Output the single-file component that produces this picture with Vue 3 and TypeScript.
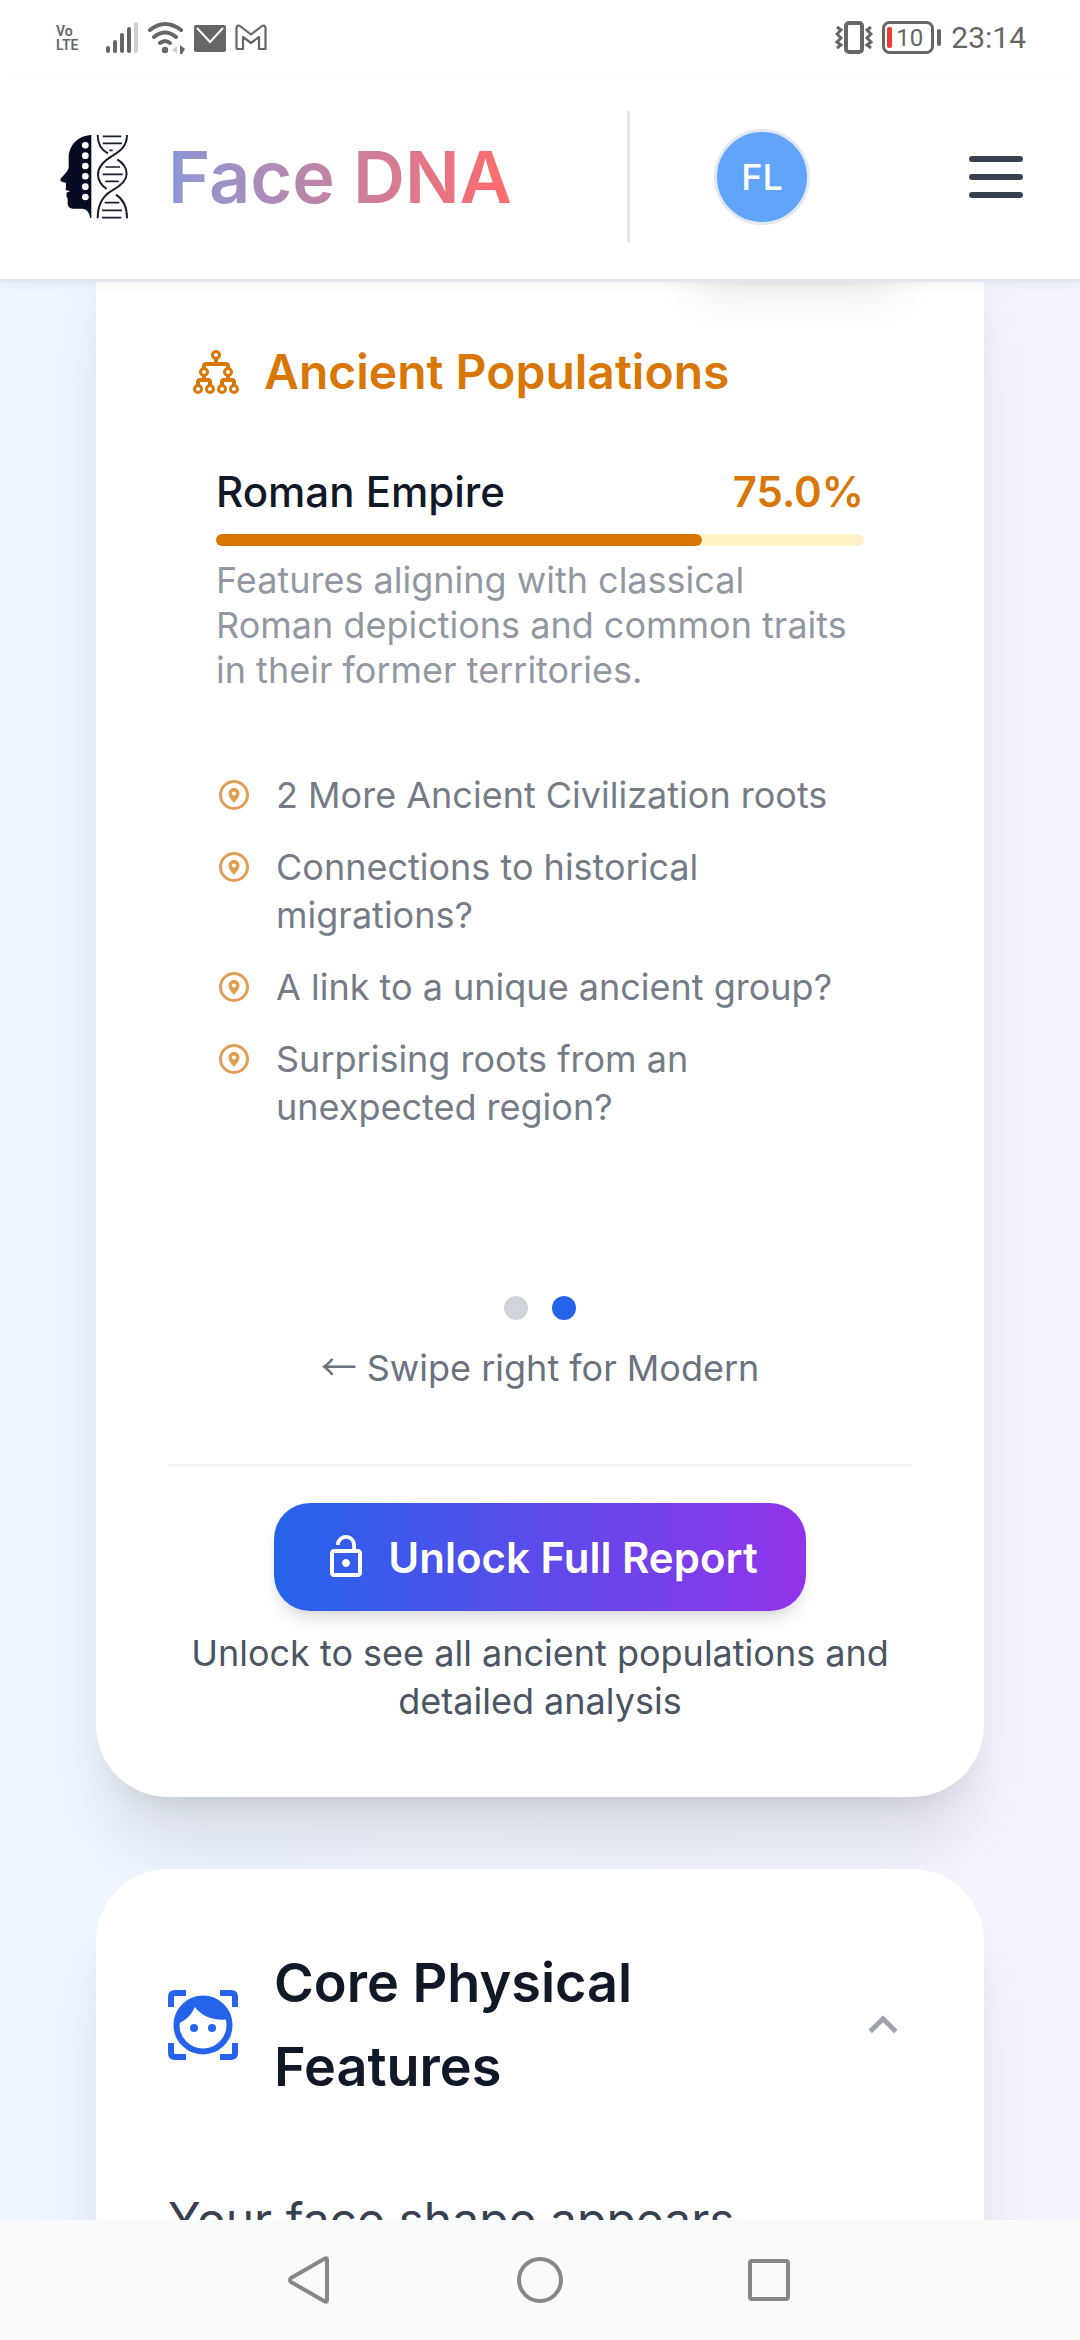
<script setup lang="ts">
import { ref } from 'vue'

interface Population {
  name: string
  percent: number
  description: string
}

const population: Population = {
  name: 'Roman Empire',
  percent: 75,
  description:
    'Features aligning with classical Roman depictions and common traits in their former territories.',
}

const teasers: string[] = [
  '2 More Ancient Civilization roots',
  'Connections to historical migrations?',
  'A link to a unique ancient group?',
  'Surprising roots from an unexpected region?',
]

const slides: string[] = ['Modern', 'Ancient']
const activeSlide = ref<number>(1)
const featuresOpen = ref<boolean>(true)
</script>

<template>
  <div class="screen">
    <div class="status">
      <div class="status-side">
        <span class="volte">Vo<br />LTE</span>
        <svg class="signal" width="32" height="34" viewBox="0 0 32 34" fill="#666">
          <rect x="0" y="25" width="4" height="7" rx="2" />
          <rect x="7" y="19" width="4" height="13" rx="2" />
          <rect x="14" y="12" width="4" height="20" rx="2" />
          <rect x="21" y="6" width="4" height="26" rx="2" />
          <rect x="28" y="1" width="4" height="31" rx="2" fill="#d2d2d2" />
        </svg>
        <svg class="wifi" width="38" height="34" viewBox="0 0 38 34" fill="none" stroke="#666" stroke-width="4" stroke-linecap="round">
          <path d="M3 9Q18 -3 34 9" />
          <path d="M7 16Q18 7 29 16" />
          <path d="M13 22Q18 18 23 22" />
          <circle cx="18" cy="29" r="3.2" fill="#666" stroke="none" />
          <path d="M25 29l5-4v8z" fill="#d2d2d2" stroke="none" />
          <path d="M33 24l5 4-3 5-2 0z" fill="#666" stroke="none" />
        </svg>
        <svg class="mail" width="32" height="34" viewBox="0 0 32 34">
          <rect x="0" y="4" width="32" height="27" rx="2" fill="#666" />
          <path d="M3 7l13 14L29 7" fill="none" stroke="#fff" stroke-width="2" />
        </svg>
        <svg class="gmail" width="32" height="34" viewBox="0 0 32 34" fill="none" stroke="#666" stroke-width="2.2" stroke-linejoin="round">
          <path d="M1.500 7Q2 3.500 5 5L16 13.500 27 5Q30 3.500 30.500 7V28H24V16L16 22 8 16V28H3Q1.500 28 1.500 26.500Z" />
        </svg>
      </div>
      <div class="status-side">
        <svg width="38" height="34" viewBox="0 0 38 34" fill="none" stroke="#666">
          <rect x="11" y="2" width="16" height="29" rx="3" stroke-width="4" />
          <path d="M2 6l4 3-4 4 4 4-4 4 4 3-4 3M36 6l-4 3 4 4-4 4 4 4-4 3 4 3" stroke-width="3" />
        </svg>
        <span class="battery">
          <svg width="60" height="34" viewBox="0 0 60 34">
            <rect x="1.500" y="1.500" width="49" height="30" rx="6" fill="none" stroke="#666" stroke-width="3" />
            <rect x="5" y="6" width="5" height="21" rx="2" fill="#f03a2e" />
            <rect x="55" y="8" width="4" height="17" rx="2" fill="#666" />
          </svg>
          <span class="battery-level">10</span>
        </span>
        <time class="clock">23:14</time>
      </div>
    </div>

    <header class="header">
      <a class="brand" href="#">
        <svg width="69" height="84" viewBox="30 44 207 252" aria-hidden="true">
          <path
            fill="#050b20"
            d="M124 44C84 46 57 74 56 112L56 140C56 150 44 162 33 174C29 179 32 184 38 185L48 187L48 202L46 208L60 213L49 217L50 224C48 228 52 232 53 236L53 250C54 262 62 265 74 265L98 265C112 267 118 278 120 292L124 294Z"
          />
          <g fill="#fff">
            <circle v-for="n in 6" :key="n" cx="106" :cy="44 + n * 31" r="10" />
          </g>
          <g fill="none" stroke="#1a1f30" stroke-width="6">
            <path d="M143 44C143 75 156 90 174 99M202 117C222 130 230 145 230 160C230 185 205 200 187 210C158 226 143 250 143 294" />
            <path d="M231 44C231 78 210 92 188 106C158 124 144 140 144 162C144 182 155 196 170 206M198 223C220 237 231 258 231 294" />
            <path d="M158 48H214M158 69H216M178 90H188M166 140H210M158 162H218M166 183H206M164 247H208M156 270H216M156 292H214" stroke-width="5" />
          </g>
        </svg>
        <span class="brand-name">Face DNA</span>
      </a>
      <span class="header-rule"></span>
      <button class="avatar" type="button">FL</button>
      <button class="menu" type="button" aria-label="Menu">
        <svg width="72" height="72" viewBox="0 0 24 24" fill="none" stroke="#374151" stroke-width="2" stroke-linecap="round">
          <path d="M4 6h16M4 12h16M4 18h16" />
        </svg>
      </button>
    </header>

    <main class="content">
      <section class="card card-ancestry">
        <div class="slide">
          <h2 class="slide-title">
            <svg width="48" height="48" viewBox="0 0 48 48" fill="none" stroke="currentColor" stroke-width="3" aria-hidden="true">
              <circle cx="24" cy="7" r="3.500" />
              <circle cx="12" cy="24" r="3.500" />
              <circle cx="36" cy="24" r="3.500" />
              <circle cx="6" cy="41" r="3.500" />
              <circle cx="18" cy="41" r="3.500" />
              <circle cx="30" cy="41" r="3.500" />
              <circle cx="42" cy="41" r="3.500" />
              <path d="M24 10v6M12 21v-3q0-2 2-2h20q2 0 2 2v3" stroke-width="4" />
              <path d="M12 27v5M6 38v-4q0-2 2-2h8q2 0 2 2v4M36 27v5M30 38v-4q0-2 2-2h8q2 0 2 2v4" stroke-width="4" />
            </svg>
            Ancient Populations
          </h2>

          <div class="population">
            <div class="population-head">
              <span class="population-name">{{ population.name }}</span>
              <span class="population-percent">{{ population.percent.toFixed(1) }}%</span>
            </div>
            <div class="bar">
              <div class="bar-fill" :style="{ width: population.percent + '%' }"></div>
            </div>
            <p class="population-text">{{ population.description }}</p>
          </div>

          <ul class="teasers">
            <li v-for="teaser in teasers" :key="teaser" class="teaser">
              <svg width="36" height="36" viewBox="0 0 36 36" aria-hidden="true">
                <circle cx="18" cy="18" r="13.500" fill="none" stroke="#e2a056" stroke-width="3" />
                <path fill="#e2a056" fill-rule="evenodd" d="M18 11c-3.300 0-5.500 2.400-5.500 5.500 0 3.500 3 6.500 5.500 9.500 2.500-3 5.500-6 5.500-9.500 0-3.100-2.200-5.500-5.500-5.500zm0 3.500a2 2 0 1 1 0 4 2 2 0 0 1 0-4z" />
              </svg>
              <span>{{ teaser }}</span>
            </li>
          </ul>
        </div>

        <div class="dots">
          <button
            v-for="(slide, index) in slides"
            :key="slide"
            type="button"
            class="dot"
            :class="{ active: index === activeSlide }"
            :aria-label="slide"
            @click="activeSlide = index"
          ></button>
        </div>
        <p class="hint"><span class="arrow">←</span> Swipe right for Modern</p>

        <div class="unlock">
          <button class="unlock-button" type="button">
            <svg width="48" height="48" viewBox="0 0 24 24" fill="#fff" aria-hidden="true">
              <path d="M12 17c1.100 0 2-.9 2-2s-.9-2-2-2-2 .9-2 2 .9 2 2 2zm6-9h-1V6c0-2.760-2.240-5-5-5S7 3.240 7 6h1.900c0-1.710 1.390-3.100 3.100-3.100 1.710 0 3.100 1.390 3.100 3.100v2H6c-1.100 0-2 .9-2 2v10c0 1.100.9 2 2 2h12c1.100 0 2-.9 2-2V10c0-1.100-.9-2-2-2zm0 12H6V10h12v10z" />
            </svg>
            Unlock Full Report
          </button>
          <p class="unlock-text">Unlock to see all ancient populations and detailed analysis</p>
        </div>
      </section>

      <section class="card card-features">
        <button class="features-head" type="button" :aria-expanded="featuresOpen" @click="featuresOpen = !featuresOpen">
          <svg width="70" height="72" viewBox="1 0 70 72" aria-hidden="true">
            <path fill="none" stroke="#2563eb" stroke-width="6" d="M19 4H8q-4 0-4 4v10M53 4h11q4 0 4 4v10M19 68H8q-4 0-4-4V54M53 68h11q4 0 4-4V54" />
            <circle cx="36" cy="36" r="26.500" fill="none" stroke="#2563eb" stroke-width="6" />
            <path fill="#2563eb" d="M8 36C8 20 20 8 36 8S62 19 63 30C48 33 34 27 28 18C25 25 19 32 8 36Z" />
            <circle cx="27" cy="39" r="4" fill="#2563eb" />
            <circle cx="45" cy="39" r="4" fill="#2563eb" />
          </svg>
          <span class="features-title">Core Physical Features</span>
          <svg width="58" height="58" viewBox="0 0 24 24" fill="#9ca3af" aria-hidden="true">
            <path d="M12 8l-6 6 1.410 1.410L12 10.830l4.590 4.580L18 14z" />
          </svg>
        </button>
        <p v-if="featuresOpen" class="features-text">Your face shape appears</p>
      </section>
    </main>

    <nav class="system-nav">
      <button type="button" aria-label="Back">
        <svg width="48" height="48" viewBox="0 0 48 48" fill="none" stroke="#888" stroke-width="4" stroke-linejoin="round">
          <path d="M37 3Q40 1 40 4V44Q40 47 37 45L4 26Q2 24 4 22Z" />
        </svg>
      </button>
      <button type="button" aria-label="Home">
        <svg width="48" height="48" viewBox="0 0 48 48" fill="none" stroke="#888" stroke-width="4">
          <circle cx="24" cy="24" r="21" />
        </svg>
      </button>
      <button type="button" aria-label="Recent apps">
        <svg width="48" height="48" viewBox="0 0 48 48" fill="none" stroke="#888" stroke-width="4">
          <rect x="5" y="5" width="38" height="38" rx="2" />
        </svg>
      </button>
    </nav>
  </div>
</template>

<style>
body {
  margin: 0;
}
</style>

<style scoped>
.screen {
  display: flex;
  flex-direction: column;
  height: 100vh;
  font-family: Inter, 'Liberation Sans', sans-serif;
  background: linear-gradient(to right, #eef6ff, #f4f4fe);
}

h2,
p,
ul {
  margin: 0;
  padding: 0;
}

button {
  padding: 0;
  border: 0;
  background: none;
  font-family: inherit;
  cursor: pointer;
}

svg {
  display: block;
  flex: none;
}

/* Phone status bar */
.status {
  display: flex;
  flex: none;
  align-items: center;
  justify-content: space-between;
  box-sizing: border-box;
  height: 75px;
  padding: 0 54px 0 56px;
  background: #fff;
  color: #666;
  position: relative;
  z-index: 2;
}

.status-side {
  display: flex;
  align-items: center;
  gap: 9px;
}

.volte {
  width: 41px;
  font: 600 14px/14px Roboto, sans-serif;
}

.battery {
  position: relative;
}

.battery-level {
  position: absolute;
  left: 14px;
  top: 0;
  font: 400 24px/34px Roboto, sans-serif;
}

.clock {
  font: 400 30px/40px Roboto, sans-serif;
}

/* App header */
.header {
  display: flex;
  flex: none;
  align-items: center;
  height: 204px;
  padding: 0 48px 0 60px;
  border-bottom: 3px solid #e2e8f0;
  background: #fff;
  box-shadow: 0 3px 9px rgba(0, 0, 0, 0.05);
  position: relative;
  z-index: 2;
}

.brand {
  display: flex;
  flex: 1;
  align-items: center;
  gap: 39px;
  text-decoration: none;
}

.brand-name {
  font-size: 72px;
  font-weight: 600;
  line-height: 96px;
  color: transparent;
  background: linear-gradient(to right, #8b98d8, #ff6b6b);
  background-clip: text;
  -webkit-background-clip: text;
}

.header-rule {
  width: 3px;
  height: 132px;
  background: #e2e8f0;
}

.avatar {
  width: 96px;
  height: 96px;
  margin: 0 150px 0 84px;
  border: 3px solid #e2e8f0;
  border-radius: 50%;
  background: #60a5fa;
  color: #fff;
  font-size: 36px;
  font-weight: 500;
}

/* Cards */
.content {
  display: flex;
  flex: 1;
  flex-direction: column;
  gap: 72px;
  min-height: 0;
  padding: 0 96px;
  overflow: hidden;
}

.card {
  position: relative;
  flex: none;
  box-sizing: border-box;
  padding: 72px;
  border-radius: 72px;
  background: #fff;
  box-shadow:
    0 60px 75px -15px rgba(0, 0, 0, 0.1),
    0 24px 30px -18px rgba(0, 0, 0, 0.1);
}

.card-ancestry {
  margin-top: -72px;
  padding-top: 132px;
}

/* Raised tab scrolled under the header */
.card-ancestry::before {
  content: '';
  position: absolute;
  top: 0;
  right: 72px;
  width: 232px;
  height: 60px;
  border-radius: 36px;
  background: #fff;
  box-shadow:
    0 30px 45px -9px rgba(0, 0, 0, 0.1),
    0 12px 18px -12px rgba(0, 0, 0, 0.1);
}

.slide {
  padding: 0 24px;
}

.slide-title {
  display: flex;
  align-items: center;
  gap: 24px;
  color: #d97706;
  font-size: 48px;
  font-weight: 600;
  line-height: 60px;
}

.population {
  margin-top: 60px;
  padding: 0 24px;
}

.population-head {
  display: flex;
  justify-content: space-between;
  font-size: 42px;
  line-height: 60px;
}

.population-name {
  color: #111827;
  font-weight: 500;
}

.population-percent {
  color: #d97706;
  font-weight: 600;
}

.bar {
  height: 12px;
  margin: 12px 0;
  border-radius: 6px;
  background: #fef3c7;
}

.bar-fill {
  height: 100%;
  border-radius: 6px;
  background: #d97706;
}

.population-text {
  color: #9298a2;
  font-size: 36px;
  line-height: 45px;
}

.teasers {
  display: flex;
  flex-direction: column;
  gap: 24px;
  margin-top: 78px;
  padding: 0 24px;
  list-style: none;
}

.teaser {
  display: flex;
  gap: 24px;
  color: #757c88;
  font-size: 36px;
  line-height: 48px;
}

.teaser svg {
  margin-top: 6px;
}

.dots {
  display: flex;
  justify-content: center;
  gap: 24px;
  margin-top: 165px;
}

.dot {
  width: 24px;
  height: 24px;
  border-radius: 50%;
  background: #d1d5db;
}

.dot.active {
  background: #2563eb;
}

.hint {
  margin-top: 24px;
  color: #6b7280;
  font-size: 36px;
  line-height: 48px;
  text-align: center;
}

.arrow {
  font-family: 'Noto Sans CJK SC', sans-serif;
  line-height: 1;
}

.unlock {
  display: flex;
  flex-direction: column;
  align-items: center;
  gap: 18px;
  margin-top: 72px;
  padding-top: 36px;
  border-top: 3px solid #f3f4f6;
}

.unlock-button {
  display: flex;
  align-items: center;
  gap: 18px;
  height: 108px;
  padding: 0 48px;
  border-radius: 36px;
  background: linear-gradient(to right, #2563eb, #9333ea);
  box-shadow:
    0 12px 18px -3px rgba(0, 0, 0, 0.1),
    0 6px 12px -6px rgba(0, 0, 0, 0.1);
  color: #fff;
  font-size: 42px;
  font-weight: 600;
}

.unlock-text {
  color: #4b5563;
  font-size: 36px;
  line-height: 48px;
  text-align: center;
}

.features-head {
  display: flex;
  align-items: center;
  gap: 36px;
  width: 100%;
  text-align: left;
}

.features-title {
  flex: 1;
  color: #111827;
  font-size: 54px;
  font-weight: 600;
  line-height: 84px;
}

.features-text {
  margin-top: 72px;
  color: #374151;
  font-size: 48px;
  line-height: 78px;
}

/* System navigation */
.system-nav {
  display: flex;
  flex: none;
  align-items: center;
  justify-content: center;
  gap: 181px;
  height: 120px;
  background: #f8fafc;
  position: relative;
  z-index: 2;
}
</style>
